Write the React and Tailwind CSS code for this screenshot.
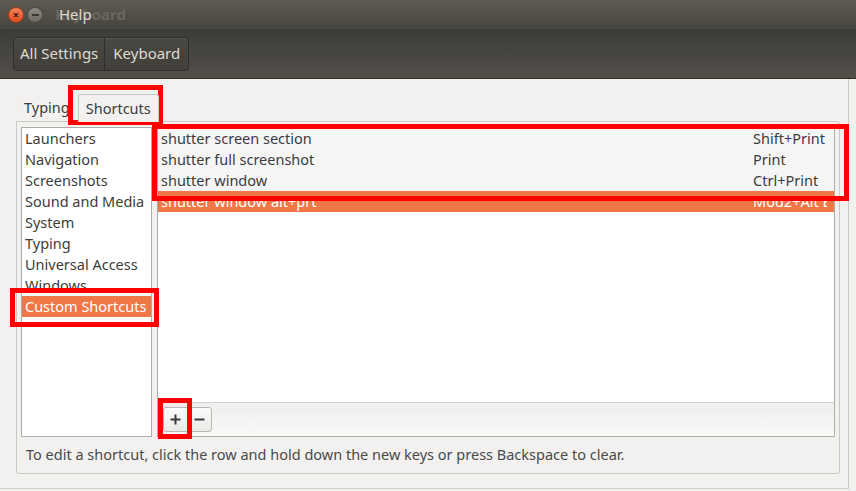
import React from "react";

const leftItems = [
  "Launchers",
  "Navigation",
  "Screenshots",
  "Sound and Media",
  "System",
  "Typing",
  "Universal Access",
  "Windows",
  "Custom Shortcuts",
];

const rows = [
  ["shutter screen section", "Shift+Print"],
  ["shutter full screenshot", "Print"],
  ["shutter window", "Ctrl+Print"],
  ["shutter window alt+prt", "Mod2+Alt E", true],
];

export default function App() {
  return (
    <div
      className="relative w-[856px] h-[491px] overflow-hidden bg-[#f2f1f0] text-[14.5px] text-[#3c3c3c]"
      style={{ fontFamily: '"Noto Sans", "DejaVu Sans", sans-serif' }}
    >
      {/* Title bar */}
      <div className="relative h-[29px] bg-gradient-to-b from-[#5d5a51] to-[#46453f] flex items-center">
        <div className="ml-[8px] w-[16px] h-[16px] rounded-full bg-gradient-to-b from-[#f5845a] to-[#df4a18] border border-[#a7391a] flex items-center justify-center text-[#3a1a10] text-[11px] leading-none font-bold">
          ×
        </div>
        <div className="ml-[3px] w-[16px] h-[16px] rounded-full bg-gradient-to-b from-[#8d8b84] to-[#6c6a64] border border-[#4a4843] flex items-center justify-center">
          <div className="w-[7px] h-[2px] bg-[#3a3935]" />
        </div>
        <div className="relative ml-[12px] text-[15px] font-bold">
          <span className="text-[#68665e]">Keyboard</span>
          <span className="absolute left-[4px] top-0 font-normal text-[#dcd8cf]">Help</span>
        </div>
      </div>

      {/* Toolbar */}
      <div className="h-[50px] bg-gradient-to-b from-[#3d3c38] to-[#524f49] border-b border-[#2e2d2a] flex items-center px-[13px]">
        <div className="flex h-[34px] rounded-[4px] border border-[#2f2e2b] bg-gradient-to-b from-[#4a4843] to-[#403f3a] shadow-[inset_0_1px_0_rgba(255,255,255,0.08)] text-[#dfdbd2] text-[15px]">
          <div className="flex items-center px-[6px] border-r border-[#2f2e2b]">All Settings</div>
          <div className="flex items-center px-[8px]">Keyboard</div>
        </div>
      </div>

      {/* Body */}
      <div className="w-[849px] h-[410px] border-r border-b border-[#cfcdc9] pl-[16px] pt-[14px]">
        {/* Tabs */}
        <div className="flex items-end h-[28px] pl-[8px]">
          <div className="h-[26px] flex items-center pr-[8px]">Typing</div>
          <div className="relative -mb-px h-[28px] flex items-center px-[7px] border border-b-0 border-[#cbc9c5] rounded-t-[3px] bg-[#f2f1f0] z-10">
            Shortcuts
          </div>
        </div>
        {/* Notebook panel */}
        <div className="w-[824px] h-[353px] border border-[#cbc9c5] rounded-b-[3px] rounded-tr-[3px] px-[4px] pt-[5px] flex flex-col">
          <div className="flex gap-[5px] h-[310px]">
            {/* Left list */}
            <div className="w-[131px] h-[310px] border border-[#aeaca8] bg-white">
              {leftItems.map((t, i) => (
                <div
                  key={t}
                  className={
                    "h-[21px] flex items-center pl-[3px] leading-none whitespace-nowrap " +
                    (i === 8 ? "bg-[#f07746] text-white" : "")
                  }
                >
                  {t}
                </div>
              ))}
            </div>
            {/* Right list */}
            <div className="w-[678px] h-[310px] border border-[#aeaca8] flex flex-col bg-white">
              <div className="flex-1">
                {rows.map(([a, b, sel]) => (
                  <div
                    key={a}
                    className={
                      "h-[21px] flex items-center pl-[3px] leading-none whitespace-nowrap " +
                      (sel ? "bg-[#f07746] text-white" : "bg-[#f5f5f5]")
                    }
                  >
                    <div className="w-[592px]">{a}</div>
                    <div className={sel ? "w-[74px] overflow-hidden" : ""}>{b}</div>
                  </div>
                ))}
              </div>
              <div className="h-[34px] border-t border-[#d4d2ce] bg-gradient-to-b from-[#efeeec] to-[#f9f9f8] flex items-center pl-[5px]">
                <div className="flex h-[25px] rounded-[3px] border border-[#b9b7b3] bg-gradient-to-b from-[#fbfbfa] to-[#eae9e7] text-[#3c3c3c]">
                  <div className="w-[24px] flex items-center justify-center border-r border-[#b9b7b3]">
                    <svg width="11" height="11" viewBox="0 0 11 11">
                      <path d="M5.5 0.5v10M0.5 5.5h10" stroke="#3c3c3c" strokeWidth="2" />
                    </svg>
                  </div>
                  <div className="w-[23px] flex items-center justify-center">
                    <svg width="11" height="11" viewBox="0 0 11 11">
                      <path d="M0.5 5.5h10" stroke="#3c3c3c" strokeWidth="2" />
                    </svg>
                  </div>
                </div>
              </div>
            </div>
          </div>
          <div className="flex-1 flex items-center pl-[5px] text-[#4a4a4a]">
            To edit a shortcut, click the row and hold down the new keys or press Backspace to clear.
          </div>
        </div>
      </div>

      {/* Red annotation boxes */}
      <div className="absolute left-[68px] top-[85px] w-[95px] h-[40px] border-[5px] border-[#ff0000]" />
      <div className="absolute left-[152px] top-[124px] w-[697px] h-[77px] border-[5px] border-[#ff0000]" />
      <div className="absolute left-[10px] top-[288px] w-[149px] h-[39px] border-[5px] border-[#ff0000]" />
      <div className="absolute left-[158px] top-[398px] w-[34px] h-[41px] border-[5px] border-[#ff0000]" />
    </div>
  );
}
